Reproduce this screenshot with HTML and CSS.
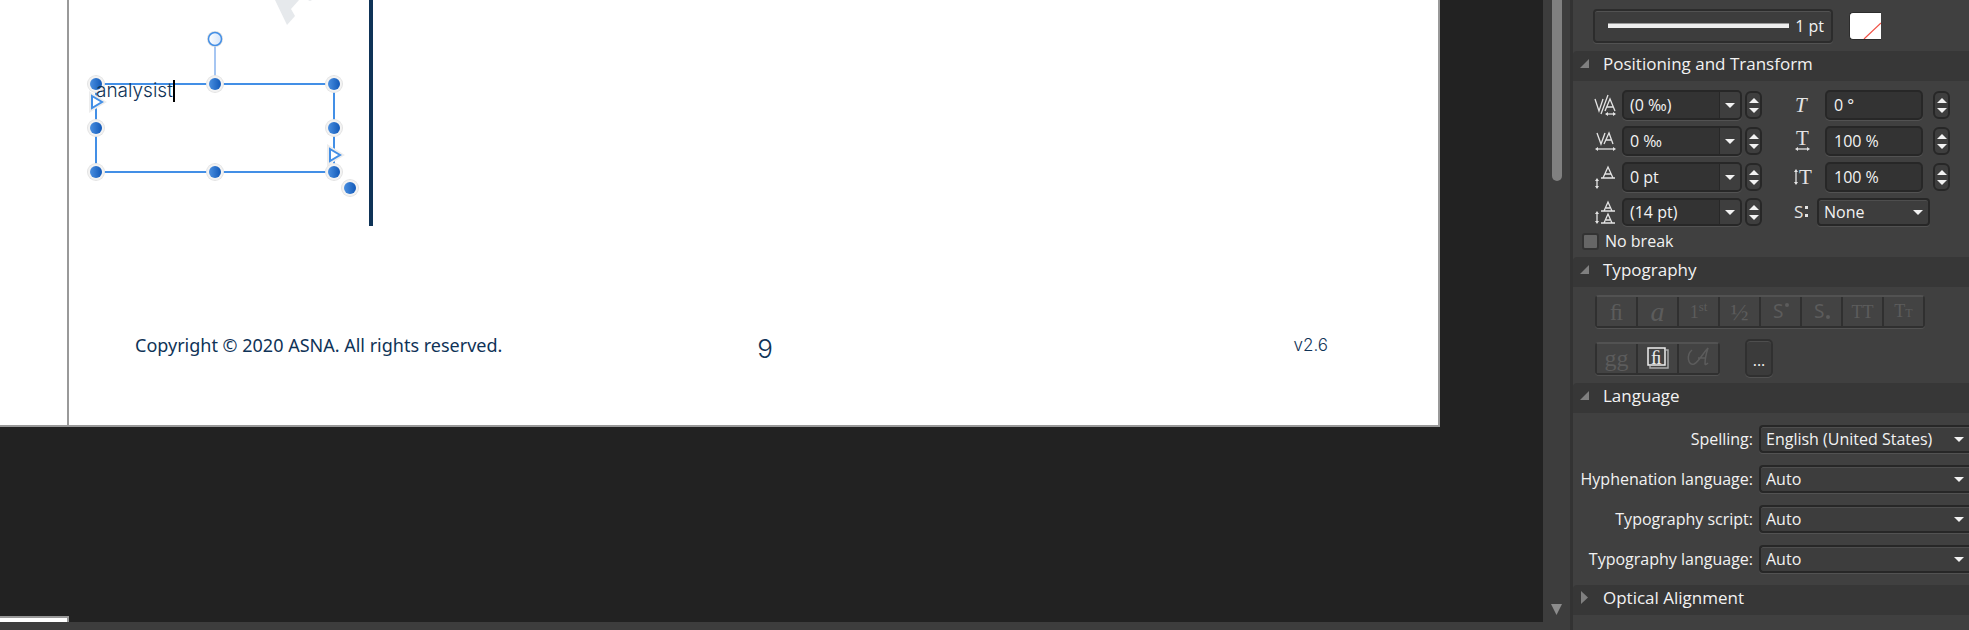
FILE: index.html
```
<!DOCTYPE html>
<html lang="en">
<head>
  <meta charset="UTF-8">
  <meta name="viewport" content="width=device-width, initial-scale=1.0">
  <title>Document editor</title>
  <link rel="stylesheet" href="styles.css">
</head>
<body>
  <div class="workspace">
    <main class="canvas">
      <div class="spread">
        <div class="page page-left"></div>
        <div class="page page-right">
          <svg class="artwork" width="320" height="240" viewBox="69 0 320 240" aria-hidden="true">
            <path d="M275 0L287 25L295 16L291 9L299 0ZM308 0H312L310 1Z" fill="#e6e9ec"/>
            <path d="M371 0V226" stroke="#0f3357" stroke-width="4"/>
          </svg>
          <svg class="frame-handles" width="290" height="190" viewBox="79 24 290 190" aria-hidden="true">
            <defs>
              <linearGradient id="blue">
                <stop offset="0" stop-color="#4a8fe0"/>
                <stop offset="1" stop-color="#1259b8"/>
              </linearGradient>
              <linearGradient id="pale">
                <stop offset="0" stop-color="#ffffff"/>
                <stop offset="1" stop-color="#d3e4fa"/>
              </linearGradient>
              <g id="handle">
                <circle r="9" fill="#e4e4e4"/>
                <circle r="8" fill="#f3f3f3"/>
                <circle r="6" fill="url(#blue)"/>
              </g>
              <g id="flow">
                <path d="M-7 -11L11 0L-7 11Z" fill="#ededed"/>
                <path d="M-4 -6L6 0L-4 6Z" fill="#fff" stroke="#438fe6" stroke-width="2"/>
              </g>
            </defs>
            <path d="M215 45V78" stroke="#a6c6f2" stroke-width="2"/>
            <rect x="96" y="84" width="238" height="88" fill="none" stroke="#438fe6" stroke-width="2"/>
            <circle cx="215" cy="39" r="8" fill="#e0e0e0"/>
            <circle cx="215" cy="39" r="6.5" fill="url(#pale)" stroke="#438fe6" stroke-width="1.5"/>
            <use href="#handle" x="96" y="84"/>
            <use href="#handle" x="215" y="84"/>
            <use href="#handle" x="334" y="84"/>
            <use href="#handle" x="96" y="128"/>
            <use href="#handle" x="334" y="128"/>
            <use href="#flow" x="96" y="102"/>
            <use href="#flow" x="334" y="155"/>
            <use href="#handle" x="96" y="172"/>
            <use href="#handle" x="215" y="172"/>
            <use href="#handle" x="334" y="172"/>
            <use href="#handle" x="350" y="188"/>
          </svg>
          <div class="text-frame">analysist<span class="caret"></span></div>
          <footer class="page-footer">
            <span>Copyright © 2020 ASNA. All rights reserved.</span>
            <span class="page-number">9</span>
            <span class="version">v2.6</span>
          </footer>
        </div>
      </div>
      <div class="next-page"></div>
    </main>

    <div class="scrollbar">
      <div class="thumb"></div>
      <button class="scroll-down" type="button" aria-label="Scroll down">
        <svg width="11" height="11"><path d="M0 0H11L5.5 11Z" fill="#8c8c8c"/></svg>
      </button>
    </div>
  </div>

  <aside class="panel">
    <div class="stroke-row">
      <button class="stroke-button" type="button"><span class="stroke-line"></span>1 pt</button>
      <button class="swatch" type="button" aria-label="Stroke colour">
        <svg width="31" height="26"><path d="M14 26L31 10" stroke="#f04f43" stroke-width="1.2"/></svg>
      </button>
    </div>

    <h2 class="section-title">
      <svg class="fold" width="9" height="9"><path d="M9 0V9H0Z"/></svg>Positioning and Transform
    </h2>
    <div class="transform">
      <div class="row">
        <label class="icon" for="kerning" aria-label="Kerning">
          <svg width="24" height="24" viewBox="0 0 24 24">
            <path d="M1 6L5 18L9 6M7 21L14 2M11 18L16 6L21 18M13 14H19"/>
            <path d="M12 21H21"/>
            <path class="solid" d="M11 21l3-2v4ZM22 21l-3-2v4Z"/>
          </svg>
        </label>
        <div class="combo"><input id="kerning" value="(0 ‰)"><button type="button" aria-label="Kerning values"></button></div>
        <div class="spinner"><button type="button" aria-label="Up"></button><button type="button" aria-label="Down"></button></div>
        <label class="icon right-icon" for="shear" aria-label="Shear">
          <svg width="24" height="24"><text x="2" y="19" class="serif-icon italic">T</text></svg>
        </label>
        <input class="field" id="shear" value="0 °">
        <div class="spinner far"><button type="button" aria-label="Up"></button><button type="button" aria-label="Down"></button></div>
      </div>
      <div class="row">
        <label class="icon" for="tracking" aria-label="Tracking">
          <svg width="24" height="24" viewBox="0 0 24 24">
            <path d="M3 4L7 15L11 4M10 15L15 4L19 15M12 11H18"/>
            <path d="M3 20H20"/>
            <path class="solid" d="M1 20l3-2v4ZM22 20l-3-2v4Z"/>
          </svg>
        </label>
        <div class="combo"><input id="tracking" value="0 ‰"><button type="button" aria-label="Tracking values"></button></div>
        <div class="spinner"><button type="button" aria-label="Up"></button><button type="button" aria-label="Down"></button></div>
        <label class="icon right-icon" for="hscale" aria-label="Horizontal scale">
          <svg width="24" height="24"><text x="3" y="16" class="serif-icon">T</text><path d="M4 20H15"/><path class="solid" d="M2 20l3-2v4ZM17 20l-3-2v4Z"/></svg>
        </label>
        <input class="field" id="hscale" value="100 %">
        <div class="spinner far"><button type="button" aria-label="Up"></button><button type="button" aria-label="Down"></button></div>
      </div>
      <div class="row">
        <label class="icon" for="baseline" aria-label="Baseline">
          <svg width="24" height="24" viewBox="0 0 24 24">
            <path d="M9 13L14 2L19 13M11 9H17M7 13H21M3 15V22"/>
            <path class="solid" d="M3 13l2 3h-4ZM3 24l2-3h-4Z"/>
          </svg>
        </label>
        <div class="combo"><input id="baseline" value="0 pt"><button type="button" aria-label="Baseline values"></button></div>
        <div class="spinner"><button type="button" aria-label="Up"></button><button type="button" aria-label="Down"></button></div>
        <label class="icon right-icon" for="vscale" aria-label="Vertical scale">
          <svg width="24" height="24"><text x="6" y="19" class="serif-icon">T</text><path d="M3 6V18"/><path class="solid" d="M3 4l2 3h-4ZM3 20l2-3h-4Z"/></svg>
        </label>
        <input class="field" id="vscale" value="100 %">
        <div class="spinner far"><button type="button" aria-label="Up"></button><button type="button" aria-label="Down"></button></div>
      </div>
      <div class="row row-short">
        <label class="icon" for="leading" aria-label="Leading">
          <svg width="24" height="24" viewBox="0 0 24 24">
            <path d="M10 11L14 2L18 11M12 8H16M7 11H21M10 23L14 14L18 23M12 20H16M7 23H21M3 13V22"/>
            <path class="solid" d="M3 11l2 3h-4ZM3 24l2-3h-4Z"/>
          </svg>
        </label>
        <div class="combo"><input id="leading" value="(14 pt)"><button type="button" aria-label="Leading values"></button></div>
        <div class="spinner"><button type="button" aria-label="Up"></button><button type="button" aria-label="Down"></button></div>
        <label class="icon right-icon icon-narrow" for="script-pos" aria-label="Superscript or subscript">
          <svg width="20" height="24"><text x="1" y="18" class="sans-icon">S</text><path class="solid" d="M12 6h3v3h-3ZM12 14h3v3h-3Z"/></svg>
        </label>
        <select class="position-select" id="script-pos"><option>None</option></select>
      </div>
      <label class="no-break"><input type="checkbox">No break</label>
    </div>

    <h2 class="section-title">
      <svg class="fold" width="9" height="9"><path d="M9 0V9H0Z"/></svg>Typography
    </h2>
    <div class="typography">
      <div class="button-group">
        <button type="button">ﬁ</button>
        <button type="button"><i class="large">a</i></button>
        <button type="button"><span class="small">1<sup>st</sup></span></button>
        <button type="button">½</button>
        <button type="button"><svg width="20" height="22"><text x="2" y="17" class="glyph">S</text><circle cx="16" cy="4" r="2"/></svg></button>
        <button type="button"><svg width="20" height="22"><text x="2" y="17" class="glyph">S</text><circle cx="16" cy="16" r="2"/></svg></button>
        <button type="button"><span class="small">TT</span></button>
        <button type="button"><span class="small">T<small>T</small></span></button>
      </div>
      <div class="typography-more">
        <div class="button-group">
          <button type="button">gg</button>
          <button type="button" class="active" aria-label="Standard ligatures">
            <svg width="24" height="24" viewBox="0 0 24 24">
              <path d="M20 4H22V22H4V20" fill="none" stroke="#aaa" stroke-width="1.5"/>
              <rect x="2" y="2" width="17" height="17" fill="none" stroke="#eee" stroke-width="1.5"/>
              <text x="5" y="18" class="ligature">ﬁ</text>
            </svg>
          </button>
          <button type="button" aria-label="Swash">
            <svg width="24" height="24"><path class="swash" d="M5 4C-1 9 1 20 7 18C12 16 16 7 21 2C19 8 18 13 18 18C18 19 20 18 21 17M11 12H19"/></svg>
          </button>
        </div>
        <button class="more" type="button">...</button>
      </div>
    </div>

    <h2 class="section-title">
      <svg class="fold" width="9" height="9"><path d="M9 0V9H0Z"/></svg>Language
    </h2>
    <div class="language">
      <label for="spelling">Spelling:</label>
      <select id="spelling"><option>English (United States)</option></select>
      <label for="hyphenation">Hyphenation language:</label>
      <select id="hyphenation"><option>Auto</option></select>
      <label for="script">Typography script:</label>
      <select id="script"><option>Auto</option></select>
      <label for="typo-language">Typography language:</label>
      <select id="typo-language"><option>Auto</option></select>
    </div>

    <h2 class="section-title">
      <svg class="fold" width="9" height="13"><path d="M1 0L8 6.5L1 13Z"/></svg>Optical Alignment
    </h2>
  </aside>
</body>
</html>
```
FILE: styles.css
```
* {
  box-sizing: border-box;
}

body {
  margin: 0;
  height: 100vh;
  display: flex;
  overflow: hidden;
  background: #3d3d3d;
  color: #f2f2f2;
  font-family: "Open Sans", "Noto Sans", sans-serif;
  font-size: 16px;
}

button,
input,
select {
  margin: 0;
  padding: 0;
  font: inherit;
  color: inherit;
}

/* Document area */
.workspace {
  flex: 1;
  min-width: 0;
  display: flex;
  padding-bottom: 8px;
}

.canvas {
  flex: 1;
  min-width: 0;
  display: flex;
  flex-direction: column;
  justify-content: space-between;
  overflow: hidden;
  background: #222;
}

.spread {
  display: flex;
  height: 427px;
  margin-right: 103px;
}

.page {
  background: #fff;
  border-right: 2px solid #999;
  border-bottom: 2px solid #999;
}

.page-left {
  width: 69px;
}

.page-right {
  position: relative;
  flex: 1;
  display: flex;
  flex-direction: column;
  justify-content: flex-end;
  color: #0f3357;
}

.artwork {
  position: absolute;
  left: 0;
  top: 0;
}

.text-frame {
  position: absolute;
  left: 27px;
  top: 80px;
  display: flex;
  font-family: Inter, sans-serif;
  font-size: 19px;
  font-weight: 300;
  line-height: 22px;
}

.caret {
  width: 2px;
  height: 22px;
  background: #000;
}

.frame-handles {
  position: absolute;
  left: 10px;
  top: 24px;
}

.page-footer {
  display: grid;
  grid-template-columns: 1fr auto 1fr;
  align-items: center;
  padding: 0 43px 60px 66px;
  font-family: "Noto Sans", sans-serif;
  font-size: 18px;
  line-height: 32px;
}

.page-number {
  padding-top: 9px;
  font-family: Inter, sans-serif;
  font-size: 26px;
  font-weight: 300;
  line-height: 32px;
}

.version {
  padding-right: 67px;
  text-align: right;
  font-family: Inter, sans-serif;
  font-size: 17px;
  font-weight: 300;
}

.next-page {
  width: 69px;
  height: 6px;
  background: #fff;
  border-top: 2px solid #999;
  border-right: 2px solid #999;
}

.scrollbar {
  width: 27px;
  display: flex;
  flex-direction: column;
  justify-content: space-between;
  align-items: center;
  padding-bottom: 7px;
  background: #3d3d3d;
}

.thumb {
  width: 10px;
  height: 181px;
  background: #808080;
  border-radius: 0 0 5px 5px;
}

.scroll-down {
  display: flex;
  border: 0;
  background: none;
}

/* Text panel */
.panel {
  width: 399px;
  background: #404040;
  border-left: 3px solid #333;
}

.stroke-row {
  display: flex;
  align-items: center;
  gap: 16px;
  height: 51px;
  padding-left: 20px;
}

.stroke-button {
  display: flex;
  align-items: center;
  gap: 6px;
  width: 240px;
  height: 34px;
  padding: 0 7px 0 13px;
  background: #3d3d3d;
  border: 2px solid #2c2c2c;
  border-radius: 4px;
  box-shadow: inset 0 1px #525252, 0 1px #525252;
}

.stroke-line {
  flex: 1;
  height: 5px;
  background: #eee;
  border-top: 1px solid #999;
}

.swatch {
  display: flex;
  border: 1px solid #2c2c2c;
  border-right: 0;
  border-radius: 4px 0 0 4px;
  background: #fff;
}

.section-title {
  display: flex;
  align-items: center;
  height: 30px;
  margin: 0;
  padding: 0 0 6px 7px;
  background: #373737;
  border-radius: 4px 0 0 0;
  font-size: 17px;
  font-weight: 400;
}

.fold {
  margin-right: 14px;
  fill: #808080;
}

.transform {
  height: 176px;
  padding: 9px 0 0 21px;
}

.row {
  display: flex;
  align-items: center;
  height: 30px;
  margin-bottom: 6px;
}

.row-short {
  height: 28px;
  margin-bottom: 4px;
}

.icon {
  display: flex;
  width: 28px;
}

.icon svg {
  fill: none;
  stroke: #e4e4e4;
  stroke-width: 1.3;
  overflow: visible;
}

.icon text {
  fill: #e4e4e4;
  stroke: none;
}

.icon .solid {
  fill: #e4e4e4;
  stroke: none;
}

.serif-icon {
  font-family: "Liberation Serif", serif;
  font-size: 21px;
}

.italic {
  font-style: italic;
}

.sans-icon {
  font-size: 17px;
}

.right-icon {
  width: 32px;
  margin-left: 31px;
}

.icon-narrow {
  width: 24px;
}

.combo {
  display: flex;
  width: 120px;
  height: 100%;
  margin-right: 3px;
  border: 2px solid #272727;
  border-radius: 5px;
  background: #333;
  box-shadow: 0 1px #525252;
}

.combo input {
  width: 95px;
  padding-left: 6px;
  border: 0;
  background: none;
}

.combo button {
  flex: 1;
  display: flex;
  align-items: center;
  justify-content: center;
  border: 0;
  border-left: 1px solid #272727;
  border-radius: 0 3px 3px 0;
  background: #3e3e3e;
}

.combo button::before,
.spinner button::before {
  content: "";
  border: 5px solid transparent;
  border-top: 5px solid #f2f2f2;
  border-bottom: 0;
}

.spinner {
  display: flex;
  flex-direction: column;
  justify-content: center;
  gap: 5px;
  width: 17px;
  height: 28px;
  border: 2px solid #272727;
  border-radius: 6px;
  background: #3e3e3e;
}

.spinner button {
  display: flex;
  justify-content: center;
  border: 0;
  background: none;
}

.spinner button:first-child::before {
  border-top: 0;
  border-bottom: 5px solid #f2f2f2;
}

.far {
  margin-left: 10px;
}

.field {
  width: 98px;
  height: 100%;
  padding-left: 7px;
  border: 2px solid #272727;
  border-radius: 5px;
  background: #333;
  box-shadow: 0 1px #525252;
}

select {
  appearance: none;
  height: 28px;
  padding-left: 5px;
  border: 2px solid #272727;
  border-radius: 4px;
  background: #3d3d3d url("data:image/svg+xml,%3Csvg xmlns='http://www.w3.org/2000/svg' width='10' height='5'%3E%3Cpath d='M0 0h10L5 5z' fill='%23f2f2f2'/%3E%3C/svg%3E") no-repeat right 5px center;
  box-shadow: inset 0 1px #4e4e4e, 0 1px #525252;
}

.position-select {
  width: 113px;
}

.no-break {
  display: inline-flex;
  align-items: center;
  gap: 6px;
  height: 22px;
  margin-left: -12px;
}

.no-break input {
  appearance: none;
  width: 17px;
  height: 17px;
  border: 2px solid #333;
  border-radius: 3px;
  background: #666;
}

.typography {
  height: 96px;
  padding: 8px 0 0 22px;
}

.button-group {
  display: inline-flex;
  height: 33px;
  border: 2px solid #303030;
  border-top-color: #525252;
  border-radius: 4px;
  box-shadow: 0 1px #525252;
}

.button-group button {
  display: flex;
  align-items: center;
  justify-content: center;
  width: 41px;
  border: 0;
  border-right: 2px solid #303030;
  background: #434343;
  color: #5c5c5c;
  font-family: "Liberation Serif", serif;
  font-size: 24px;
  line-height: 24px;
}

.button-group button:last-child {
  width: 39px;
  border-right: 0;
}

.button-group svg {
  fill: #5c5c5c;
  overflow: visible;
}

.button-group .small {
  font-size: 18px;
}

.button-group .large {
  font-size: 28px;
}

.small sup {
  font-size: 13px;
  line-height: 1;
}

.small small {
  font-size: 12px;
}

.glyph {
  font-family: "Noto Sans", sans-serif;
  font-size: 19px;
}

.ligature {
  fill: #eee;
  font-size: 19px;
}

.button-group .swash {
  fill: none;
  stroke: #5c5c5c;
  stroke-width: 1.5;
}

.typography-more {
  display: flex;
  align-items: center;
  gap: 25px;
  margin-top: 11px;
}

.more {
  width: 28px;
  height: 38px;
  padding-top: 4px;
  border: 2px solid #303030;
  border-radius: 5px;
  background: #3b3b3b;
  box-shadow: inset 0 1px #4e4e4e, 0 1px #525252;
}

.language {
  display: grid;
  grid-template-columns: 180px 1fr;
  column-gap: 6px;
  row-gap: 12px;
  align-items: center;
  height: 172px;
  padding: 12px 0;
}

.language label {
  text-align: right;
  white-space: nowrap;
}

.language select {
  border-right: 0;
  border-radius: 4px 0 0 4px;
}
```
